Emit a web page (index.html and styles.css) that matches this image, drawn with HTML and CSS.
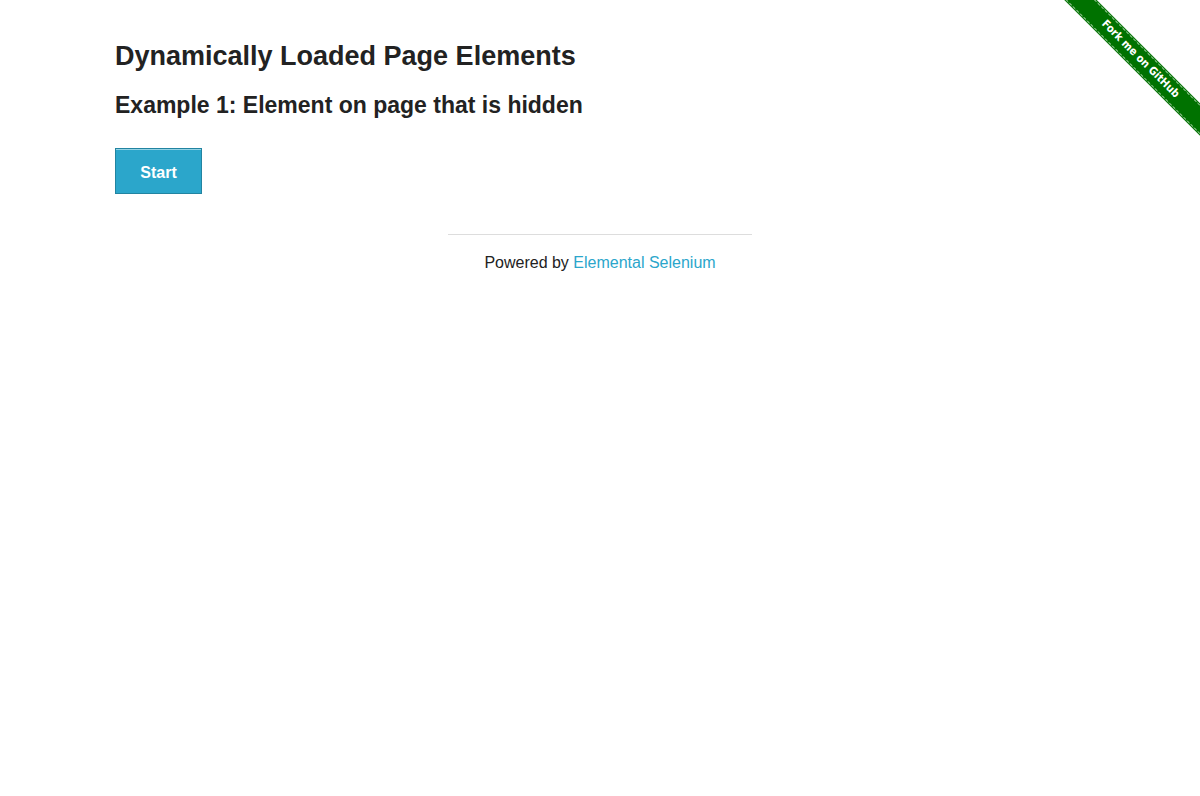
FILE: index.html
```html
<!DOCTYPE html>
<html>
<head>
<meta charset="utf-8">
<title>The Internet</title>
<link rel="stylesheet" href="styles.css">
</head>
<body>
<a class="ribbon" href="#"><span class="ribbon-band">Fork me on GitHub</span></a>
<div class="row">
  <div class="content">
    <h3 class="title">Dynamically Loaded Page Elements</h3>
    <h4 class="subtitle">Example 1: Element on page that is hidden</h4>
    <div class="start"><button class="btn">Start</button></div>
  </div>
</div>
<div class="footer">
  <hr class="rule">
  <div class="powered">Powered by <a class="link" href="#">Elemental Selenium</a></div>
</div>
</body>
</html>
```
FILE: styles.css
```css
html, body {
  margin: 0;
  padding: 0;
  background: #fff;
  color: #222;
  font-family: "Liberation Sans", Arial, sans-serif;
  overflow: hidden;
}
.row {
  box-sizing: border-box;
  max-width: 1000px;
  margin: 0 auto;
  padding: 0 15px;
}
.content {
  display: flex;
  flex-direction: column;
  align-items: flex-start;
  padding-top: 39px;
}
.title {
  margin: 0;
  font-size: 27px;
  line-height: 34px;
  font-weight: bold;
  color: #222;
}
.subtitle {
  margin: 18px 0 0;
  font-size: 23px;
  line-height: 28px;
  font-weight: bold;
  color: #222;
}
.start {
  margin-top: 29px;
}
.btn {
  display: block;
  width: 87px;
  height: 46px;
  background: #2ba6cb;
  border: 1px solid #2284a1;
  box-shadow: inset 0 1px 0 rgba(255,255,255,0.5);
  color: #fff;
  font-family: "Liberation Sans", Arial, sans-serif;
  font-weight: bold;
  font-size: 16px;
  padding: 3px 0 0;
  cursor: pointer;
}
.footer {
  display: flex;
  flex-direction: column;
  align-items: center;
  margin-top: 40px;
}
.rule {
  width: 304px;
  margin: 0;
  border: 0;
  border-top: 1px solid #ddd;
}
.powered {
  margin-top: 18px;
  font-size: 16px;
  line-height: 20px;
  color: #222;
}
.link {
  color: #2ba6cb;
  text-decoration: none;
}
.ribbon {
  position: absolute;
  top: 0;
  right: 0;
  width: 149px;
  height: 149px;
  overflow: hidden;
  text-decoration: none;
}
.ribbon-band {
  position: absolute;
  top: 49px;
  left: -21px;
  width: 220px;
  height: 21px;
  box-sizing: border-box;
  transform: rotate(45deg);
  transform-origin: 50% 50%;
  background: #007200;
  color: #fff;
  font-family: "DejaVu Sans Condensed", "DejaVu Sans", sans-serif;
  font-weight: bold;
  font-size: 11px;
  line-height: 18px;
  text-align: center;
  border-top: 1px dashed rgba(255,255,255,0.6);
  border-bottom: 1px dashed rgba(255,255,255,0.6);
  outline: 1px solid #007200;
}
```
